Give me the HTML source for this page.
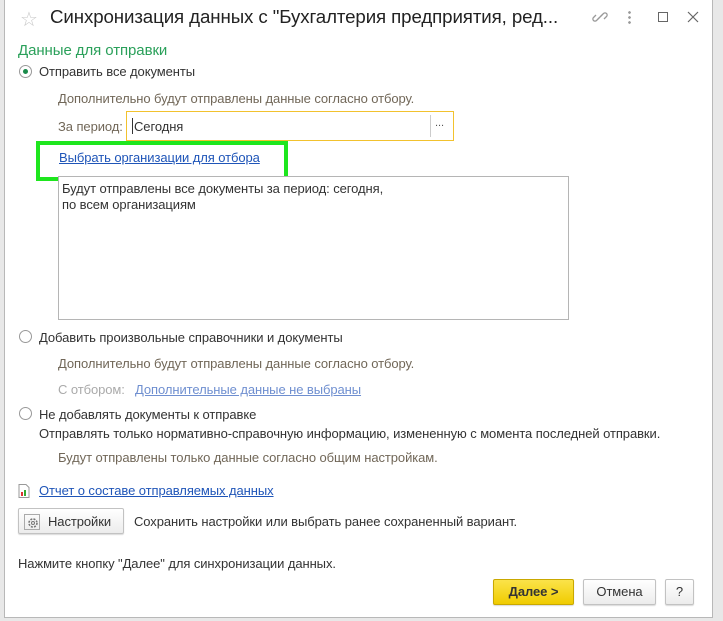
<!DOCTYPE html>
<html><head><meta charset="utf-8"><style>
*{margin:0;padding:0;box-sizing:border-box}
body{width:723px;height:621px;background:#e8e8e8;font-family:"Liberation Sans",Arial,sans-serif;font-size:13px;letter-spacing:-0.08px;color:#333;position:relative;overflow:hidden}
.win{position:absolute;left:4px;top:0;width:709px;height:618px;background:#fff;border:1px solid #b8b8b8;border-top:none}
.a{position:absolute;white-space:nowrap}
.g{color:#716758}
.lnk{color:#1f55b8;text-decoration:underline}
.radio{position:absolute;width:13px;height:13px;border:1px solid #999;border-radius:50%;background:#fff}
.btn{position:absolute;border:1px solid #c2c2c2;border-radius:2px;background:linear-gradient(#fff,#ececec);box-shadow:0 1px 1px rgba(0,0,0,.15);text-align:center}
</style></head><body>
<div class="win"></div>
<div class="a" style="left:20px;top:7px;font-size:20px;color:#c8c8c8">☆</div>
<div class="a" style="left:50px;top:6px;font-size:18.7px;letter-spacing:-0.1px;color:#222">Синхронизация данных с "Бухгалтерия предприятия, ред...</div>
<svg class="a" style="left:592px;top:9px" width="16" height="16" viewBox="0 0 16 16"><g fill="none" stroke="#999" stroke-width="1.3"><path d="M7 9l-2.5 2.5a2 2 0 0 1-3-3L4 6"/><path d="M9 7l2.5-2.5a2 2 0 0 1 3 3L12 10"/><path d="M6 10l4-4"/></g></svg>
<div class="a" style="left:628px;top:10px;width:3px;height:14px;background:radial-gradient(circle,#999 1.2px,transparent 1.5px) 0 0/3px 5px"></div>
<div class="a" style="left:658px;top:12px;width:10px;height:10px;border:1px solid #666"></div>
<svg class="a" style="left:687px;top:11px" width="12" height="12" viewBox="0 0 12 12"><path d="M1 1l10 10M11 1L1 11" stroke="#666" stroke-width="1.2"/></svg>

<div class="a" style="left:18px;top:42px;font-size:15px;color:#2aa05a">Данные для отправки</div>
<div class="radio" style="left:19px;top:65px"><div style="position:absolute;left:3px;top:3px;width:5px;height:5px;border-radius:50%;background:#1a8a4a"></div></div>
<div class="a" style="left:39px;top:64px">Отправить все документы</div>
<div class="a g" style="left:58px;top:91px">Дополнительно будут отправлены данные согласно отбору.</div>
<div class="a g" style="left:58px;top:119px">За период:</div>
<div class="a" style="left:126px;top:111px;width:328px;height:30px;border:1px solid #f2c22e;background:#fff"></div>
<div class="a" style="left:430px;top:115px;width:1px;height:22px;background:#ccc"></div>
<div class="a" style="left:435px;top:117px;font-size:11px;color:#555">...</div>
<div class="a" style="left:132px;top:118px;width:1px;height:16px;background:#333"></div>
<div class="a" style="left:134px;top:119px;color:#333">Сегодня</div>
<div class="a" style="left:36px;top:141px;width:252px;height:40px;border:4px solid #1ee61e"></div>
<div class="a lnk" style="left:59px;top:150px">Выбрать организации для отбора</div>
<div class="a" style="left:58px;top:176px;width:511px;height:144px;border:1px solid #b5b5b5;background:#fff"></div>
<div class="a" style="left:62px;top:181px;line-height:16px">Будут отправлены все документы за период: сегодня,<br>по всем организациям</div>

<div class="radio" style="left:19px;top:330px"></div>
<div class="a" style="left:39px;top:330px">Добавить произвольные справочники и документы</div>
<div class="a g" style="left:58px;top:356px">Дополнительно будут отправлены данные согласно отбору.</div>
<div class="a" style="left:58px;top:382px;color:#aaa">С отбором:</div>
<div class="a" style="left:135px;top:382px;color:#6f8fd0;text-decoration:underline">Дополнительные данные не выбраны</div>
<div class="radio" style="left:19px;top:407px"></div>
<div class="a" style="left:39px;top:407px">Не добавлять документы к отправке</div>
<div class="a" style="left:39px;top:426px">Отправлять только нормативно-справочную информацию, измененную с момента последней отправки.</div>
<div class="a g" style="left:58px;top:450px">Будут отправлены только данные согласно общим настройкам.</div>

<svg class="a" style="left:18px;top:484px" width="12" height="14" viewBox="0 0 12 14"><path d="M1 .5h7l3 3v10H1z" fill="#fff" stroke="#999"/><rect x="3" y="8" width="2" height="4" fill="#d33"/><rect x="6" y="6" width="2" height="6" fill="#3a3"/></svg>
<div class="a lnk" style="left:39px;top:483px">Отчет о составе отправляемых данных</div>
<div class="btn" style="left:18px;top:508px;width:106px;height:26px"></div>
<svg class="a" style="left:24px;top:514px" width="16" height="16" viewBox="0 0 16 16"><rect x=".5" y=".5" width="15" height="15" fill="none" stroke="#aaa"/><circle cx="9" cy="9" r="4" fill="none" stroke="#777" stroke-width="1.6" stroke-dasharray="2 1.2"/><circle cx="9" cy="9" r="1.5" fill="none" stroke="#777"/></svg>
<div class="a" style="left:48px;top:514px">Настройки</div>
<div class="a" style="left:134px;top:514px">Сохранить настройки или выбрать ранее сохраненный вариант.</div>
<div class="a" style="left:18px;top:556px">Нажмите кнопку "Далее" для синхронизации данных.</div>
<div class="btn" style="left:493px;top:579px;width:81px;height:26px;background:linear-gradient(#fbe34a,#f0cc00);border-color:#c9a800;font-weight:bold;line-height:24px;color:#333">Далее &gt;</div>
<div class="btn" style="left:583px;top:579px;width:73px;height:26px;line-height:24px">Отмена</div>
<div class="btn" style="left:665px;top:579px;width:29px;height:26px;line-height:24px">?</div>
</body></html>
